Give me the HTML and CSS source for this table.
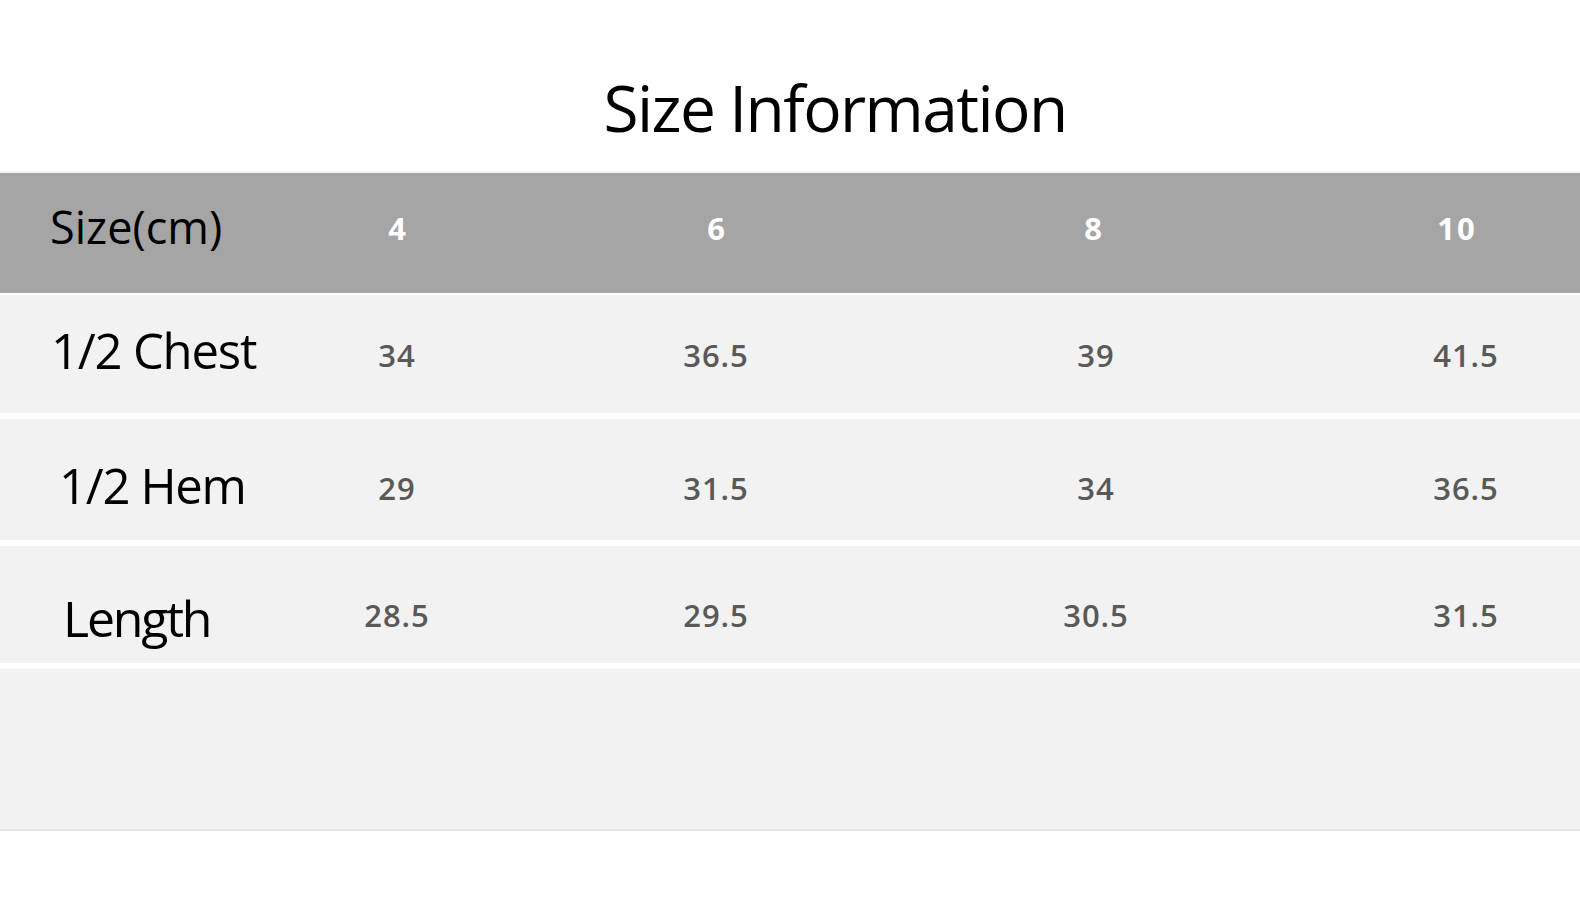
FILE: index.html
```html
<!DOCTYPE html>
<html lang="en">
<head>
<meta charset="utf-8">
<title>Size Information</title>
<link rel="stylesheet" href="styles.css">
</head>
<body>
<main class="page">
  <h1 class="title">Size Information</h1>
  <section class="table">
    <div class="row row--head">
      <div class="label">Size(cm)</div>
      <div class="val c1">4</div>
      <div class="val c2">6</div>
      <div class="val c3">8</div>
      <div class="val c4">10</div>
    </div>
    <div class="row row--chest">
      <div class="label">1/2 Chest</div>
      <div class="val c1">34</div>
      <div class="val c2">36.5</div>
      <div class="val c3">39</div>
      <div class="val c4">41.5</div>
    </div>
    <div class="row row--hem">
      <div class="label">1/2 Hem</div>
      <div class="val c1">29</div>
      <div class="val c2">31.5</div>
      <div class="val c3">34</div>
      <div class="val c4">36.5</div>
    </div>
    <div class="row row--length">
      <div class="label">Length</div>
      <div class="val c1">28.5</div>
      <div class="val c2">29.5</div>
      <div class="val c3">30.5</div>
      <div class="val c4">31.5</div>
    </div>
    <div class="row row--blank"></div>
  </section>
</main>
</body>
</html>
```

FILE: styles.css
```css
html, body {
  margin: 0;
  padding: 0;
  background: #ffffff;
}

.page {
  width: 1580px;
  font-family: "Open Sans", "Noto Sans", sans-serif;
}

.title {
  margin: 0;
  height: 171px;
  box-sizing: border-box;
  padding: 76px 0 0 90px;
  font-size: 64px;
  line-height: 64px;
  font-weight: 400;
  letter-spacing: -1.6px;
  color: #000;
  text-align: center;
}

.table {
  display: flex;
  flex-direction: column;
  border-top: 2px solid #f4f4f4;
}

.row {
  display: grid;
  grid-template-columns: 337px 120px 199px 120px 260px 120px 250px 120px 1fr;
  align-items: start;
  background: #f2f2f2;
  box-sizing: border-box;
}

.label {
  grid-column: 1;
  color: #000;
  font-weight: 400;
  white-space: nowrap;
}

.val {
  text-align: center;
  color: #595959;
  font-weight: 600;
  font-size: 31px;
  line-height: 31px;
  letter-spacing: 1px;
}

.c1 { grid-column: 2; }
.c2 { grid-column: 4; }
.c3 { grid-column: 6; }
.c4 { grid-column: 8; }

/* header */
.row--head {
  height: 120px;
  background: #a5a5a5;
  grid-template-columns: 338px 120px 199px 120px 257px 120px 243px 120px 1fr;
}
.row--head .label {
  font-size: 45px;
  line-height: 45px;
  padding: 31px 0 0 50px;
}
.row--head .val {
  color: #ffffff;
  font-weight: 700;
  font-size: 31px;
  line-height: 31px;
  letter-spacing: 2px;
  padding-top: 40px;
}

/* body rows */
.row--chest {
  height: 118px;
  margin-top: 2px;
}
.row--chest .label {
  font-size: 49px;
  line-height: 49px;
  letter-spacing: -1.2px;
  padding: 31px 0 0 51px;
}
.row--chest .val { padding-top: 45px; }

.row--hem {
  height: 121px;
  margin-top: 6px;
}
.row--hem .label {
  font-size: 49px;
  line-height: 49px;
  letter-spacing: -1.3px;
  padding: 42px 0 0 59px;
}
.row--hem .val { padding-top: 54px; }

.row--length {
  height: 117px;
  margin-top: 6px;
}
.row--length .label {
  font-size: 50px;
  line-height: 50px;
  letter-spacing: -2.2px;
  padding: 47px 0 0 63px;
}
.row--length .val { padding-top: 54px; }

.row--blank {
  height: 162px;
  margin-top: 6px;
  border-bottom: 2px solid #e6e6e6;
  box-shadow: 0 2px 3px rgba(0, 0, 0, 0.16), 0 5px 7px rgba(0, 0, 0, 0.06);
}
```
